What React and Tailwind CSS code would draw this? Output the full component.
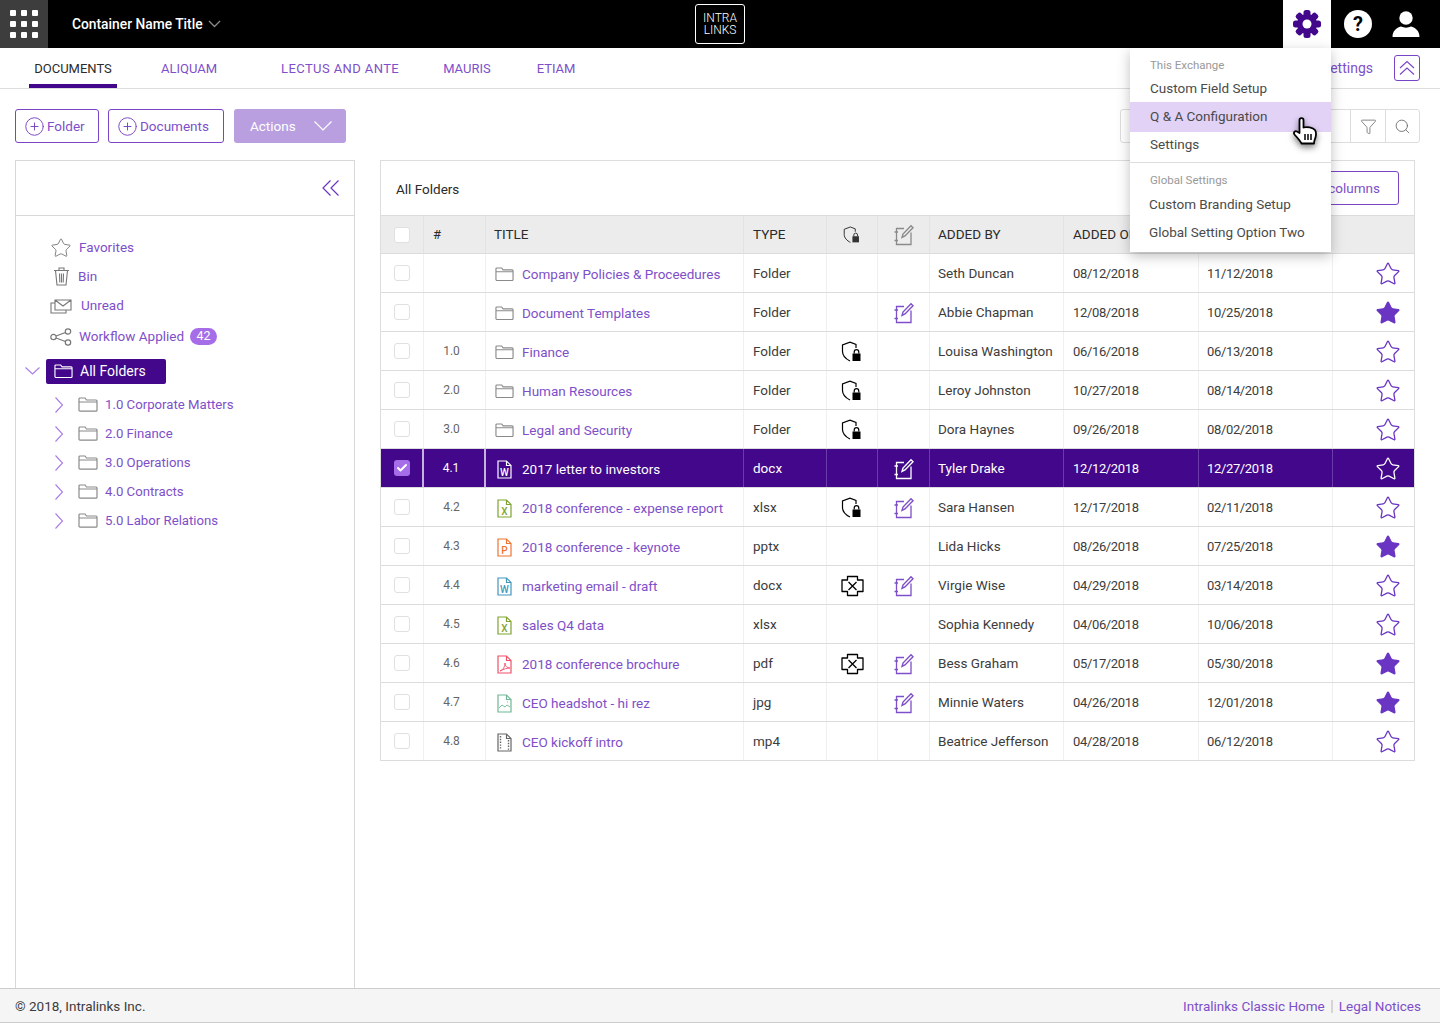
import { Check, CirclePlus, Filter, Search, Star } from 'lucide-react';

const ROWS = [
  { num: '', icon: 'folder', title: 'Company Policies & Proceedures', type: 'Folder', lock: '', edit: false, by: 'Seth Duncan', on: '08/12/2018', mod: '11/12/2018', fav: false },
  { num: '', icon: 'folder', title: 'Document Templates', type: 'Folder', lock: '', edit: true, by: 'Abbie Chapman', on: '12/08/2018', mod: '10/25/2018', fav: true },
  { num: '1.0', icon: 'folder', title: 'Finance', type: 'Folder', lock: 'lock', edit: false, by: 'Louisa Washington', on: '06/16/2018', mod: '06/13/2018', fav: false },
  { num: '2.0', icon: 'folder', title: 'Human Resources', type: 'Folder', lock: 'lock', edit: false, by: 'Leroy Johnston', on: '10/27/2018', mod: '08/14/2018', fav: false },
  { num: '3.0', icon: 'folder', title: 'Legal and Security', type: 'Folder', lock: 'lock', edit: false, by: 'Dora Haynes', on: '09/26/2018', mod: '08/02/2018', fav: false },
  { num: '4.1', icon: 'w', title: '2017 letter to investors', type: 'docx', lock: '', edit: true, by: 'Tyler Drake', on: '12/12/2018', mod: '12/27/2018', fav: false, selected: true },
  { num: '4.2', icon: 'x', title: '2018 conference - expense report', type: 'xlsx', lock: 'lock', edit: true, by: 'Sara Hansen', on: '12/17/2018', mod: '02/11/2018', fav: false },
  { num: '4.3', icon: 'p', title: '2018 conference - keynote', type: 'pptx', lock: '', edit: false, by: 'Lida Hicks', on: '08/26/2018', mod: '07/25/2018', fav: true },
  { num: '4.4', icon: 'w', title: 'marketing email - draft', type: 'docx', lock: 'x', edit: true, by: 'Virgie Wise', on: '04/29/2018', mod: '03/14/2018', fav: false },
  { num: '4.5', icon: 'x', title: 'sales Q4 data', type: 'xlsx', lock: '', edit: false, by: 'Sophia Kennedy', on: '04/06/2018', mod: '10/06/2018', fav: false },
  { num: '4.6', icon: 'pdf', title: '2018 conference brochure', type: 'pdf', lock: 'x', edit: true, by: 'Bess Graham', on: '05/17/2018', mod: '05/30/2018', fav: true },
  { num: '4.7', icon: 'img', title: 'CEO headshot - hi rez', type: 'jpg', lock: '', edit: true, by: 'Minnie Waters', on: '04/26/2018', mod: '12/01/2018', fav: true },
  { num: '4.8', icon: 'vid', title: 'CEO kickoff intro', type: 'mp4', lock: '', edit: false, by: 'Beatrice Jefferson', on: '04/28/2018', mod: '06/12/2018', fav: false },
];

const TREE = ['1.0 Corporate Matters', '2.0 Finance', '3.0 Operations', '4.0 Contracts', '5.0 Labor Relations'];

const FILE_COLORS = { w: '#3f97bd', x: '#7fa32f', p: '#ee7432', pdf: '#f0506a', img: '#6fb895', vid: '#666666' };

function FolderIcon({ className = 'text-[#8a8a8a]', size = 20 }) {
  return (
    <svg width={size} height={size * 0.75} viewBox="0 0 20 15" fill="none" stroke="currentColor" strokeWidth="1.2" className={className}>
      <path d="M1 13.2V2a1 1 0 0 1 1-1h5l1.5 2H18a1 1 0 0 1 1 1v9.2a1 1 0 0 1-1 1H2a1 1 0 0 1-1-1zM1 5h18" />
    </svg>
  );
}

function FileIcon({ kind, light }) {
  const color = light ? '#ffffff' : FILE_COLORS[kind];
  const letter = { w: 'W', x: 'X', p: 'P' }[kind];
  return (
    <svg width="15" height="19" viewBox="0 0 15 19" fill="none" stroke={color} strokeWidth="1.2">
      <path d="M1 1h8.5L14 5.5V18H1zM9.5 1v4.5H14" />
      {letter && <text x="7.5" y="15.5" textAnchor="middle" fontSize="10" fontWeight="500" fontFamily="Roboto, sans-serif" fill={color} stroke="none">{letter}</text>}
      {kind === 'pdf' && <path d="M3 16c3-1 5-4 5-8 0 3 2 5 5 5-3 0-6 1-10 3z" strokeWidth="0.9" />}
      {kind === 'img' && <path d="M2 14l3-3 3 2 2-2 3 2M10 8h1" strokeWidth="0.9" />}
      {kind === 'vid' && <path d="M3.5 3v14M11.5 7v10" strokeWidth="1.4" strokeDasharray="1.4 1.4" />}
    </svg>
  );
}

function ShieldLock({ size = 22, muted }) {
  const c = muted ? '#333333' : '#000000';
  return (
    <svg width={size} height={size} viewBox="0 0 22 22" fill="none">
      <path d="M15 7V3.5L9 1.2 1.5 4v6.5c0 4 3.5 7.5 7.5 9.5" stroke={c} strokeWidth="1.2" />
      <rect x="11.5" y="12.5" width="8" height="7.5" fill={c} />
      <path d="M13.2 12.5V11a2.3 2.3 0 0 1 4.6 0v1.5" stroke={c} strokeWidth="1.2" />
    </svg>
  );
}

function CrossBadge() {
  return (
    <svg width="23" height="22" viewBox="0 0 23 22" fill="none" stroke="#000000" strokeWidth="1.3">
      <path d="M6.5 1.5h10V5H22v11.500h-5.500v4h-10v-4H1V5h5.500z" strokeLinejoin="round" />
      <path d="M7.5 7l8 8M15.5 7l-8 8" />
    </svg>
  );
}

function NoteEdit({ color = '#7e4fc9' }) {
  return (
    <svg width="22" height="22" viewBox="0 0 22 22" fill="none" stroke={color} strokeWidth="1.3">
      <path d="M11 4.5H3.5v16H18V8.500" />
      <path d="M1.5 8H5M1.5 16.500H5" />
      <path d="M9 13.500l1-3.500 8-8.300 2 2-8 8.300z" strokeWidth="1.4" />
    </svg>
  );
}

function Gear() {
  return (
    <svg width="30" height="30" viewBox="0 0 30 30" fill="#42078a">
      {[0, 45, 90, 135].map(a => (
        <rect key={a} x="11.5" y="1" width="7" height="28" rx="2.5" transform={`rotate(${a} 15 15)`} />
      ))}
      <circle cx="15" cy="15" r="10" />
      <circle cx="15" cy="15" r="4.5" fill="#ffffff" />
    </svg>
  );
}

function MiniCheckbox({ checked }) {
  if (checked) {
    return (
      <span className="flex h-4 w-4 items-center justify-center rounded-[3px] bg-[#a56ee8]">
        <Check size={12} strokeWidth={4} className="text-white" />
      </span>
    );
  }
  return <span className="block h-4 w-4 rounded-[3px] border border-[#e0e0e0] bg-white" />;
}

function HandCursor() {
  return (
    <svg width="26" height="30" viewBox="0 0 26 30" className="drop-shadow-[0_3px_3px_rgba(0,0,0,0.5)]">
      <path d="M7.5 3c0-2.600 4-2.600 4 0v7.500c3.500-1 9.500 0 11.500 2.500 1 1.500 1 5.500.5 7.500-.5 2-1.500 3-1.500 6H9.500c-1-2.500-4-5.500-7-9-1.500-2 .5-4 2.500-3l2.500 1.500z" fill="#ffffff" stroke="#000000" strokeWidth="1.8" strokeLinejoin="round" />
      <path d="M13 17v6M16 17v6M19 17v6" stroke="#000000" strokeWidth="1.5" />
    </svg>
  );
}

function Cell({ width, className = '', children, selected }) {
  return (
    <div className={`flex h-full shrink-0 items-center border-r ${selected ? 'border-[#6a3aa6]' : 'border-[#f0f0f0]'} ${className}`} style={{ width }}>
      {children}
    </div>
  );
}

function TableRow({ row }) {
  const s = row.selected;
  return (
    <div className={`flex h-[39px] items-center border-b border-[#dcdcdc] ${s ? 'bg-[#42078a] text-white' : 'bg-white text-[#3c3c3c]'}`}>
      <Cell width={43} selected={s} className={`justify-center ${s ? 'border-r-2 border-r-[#c5b3dc]' : ''}`}><MiniCheckbox checked={s} /></Cell>
      <Cell width={62} selected={s} className={`justify-center pr-[6px] text-[12px] ${s ? 'border-r-2 border-r-[#c5b3dc] text-white' : 'text-[#666666]'}`}>{row.num}</Cell>
      <Cell width={258} selected={s} className="gap-[8px] pl-[8px] pt-[2px]">
        <span className="flex w-[20px] justify-center">
          {row.icon === 'folder' ? <FolderIcon size={19} /> : <FileIcon kind={row.icon} light={s} />}
        </span>
        <span className={`text-[13.5px] ${s ? 'text-white' : 'text-[#7e4fc9]'}`}>{row.title}</span>
      </Cell>
      <Cell width={83} selected={s} className="pl-[9px] text-[13.5px]">{row.type}</Cell>
      <Cell width={51} selected={s} className="justify-center pt-[2px]">
        {row.lock === 'lock' && <ShieldLock />}
        {row.lock === 'x' && <CrossBadge />}
      </Cell>
      <Cell width={52} selected={s} className="justify-center pt-[2px]">
        {row.edit && <NoteEdit color={s ? '#ffffff' : '#7e4fc9'} />}
      </Cell>
      <Cell width={134} selected={s} className="pl-[8px] text-[13.5px]">{row.by}</Cell>
      <Cell width={135} selected={s} className="pl-[9px] pt-[1px] text-[13px] tracking-[-0.35px]">{row.on}</Cell>
      <Cell width={134} selected={s} className="pl-[8px] pt-[1px] text-[13px] tracking-[-0.35px]">{row.mod}</Cell>
      <div className="flex flex-1 justify-center pl-[28px] pt-[1px]">
        <Star size={26} strokeWidth={1.2} className={s ? 'text-white' : 'text-[#6a35c2]'} fill={row.fav ? '#6a35c2' : 'none'} />
      </div>
    </div>
  );
}

function NavItem({ icon, label, textClass = 'ml-[7px]', className = 'h-[29px]', children }) {
  return (
    <div className={`flex items-center pl-[34px] text-[13.5px] text-[#7e4fc9] ${className}`}>
      <span className="flex w-[22px] justify-center text-[#777777]">{icon}</span>
      <span className={textClass}>{label}</span>
      {children}
    </div>
  );
}

function OutlineButton({ label, className = '' }) {
  return (
    <button className={`flex h-[34px] items-center gap-[2px] rounded-[3px] border border-[#7a45c4] bg-white pl-[8px] text-[13.5px] text-[#7e4fc9] ${className}`}>
      <CirclePlus size={21} strokeWidth={1.1} className="text-[#7a45c4]" />
      {label}
    </button>
  );
}

function MenuItem({ label, className = 'h-[28px] pl-[20px]' }) {
  return <div className={`flex items-center text-[13.5px] text-[#4a4a4a] ${className}`}>{label}</div>;
}

export default function App() {
  return (
    <div className="relative flex h-[1024px] w-[1440px] flex-col overflow-hidden bg-white pb-px font-['Roboto',sans-serif]">
      {/* top bar */}
      <div className="flex h-12 shrink-0 items-center bg-black text-white">
        <div className="grid h-12 w-12 grid-cols-3 content-center justify-items-center gap-[5px] bg-[#3d3d3d] px-[10px]">
          {Array.from({ length: 9 }).map((_, i) => <span key={i} className="h-[6px] w-[6px] rounded-[1px] bg-white" />)}
        </div>
        <div className="ml-6 flex w-[623px] items-center gap-[5px] text-[13.8px] font-medium">
          Container Name Title
          <svg width="13" height="8" viewBox="0 0 13 8" fill="none" stroke="#8a8a8a" strokeWidth="1.3"><path d="M1 1l5.500 5.500L12 1" /></svg>
        </div>
        <div className="flex h-10 w-[50px] flex-col items-center justify-center rounded-[3px] border border-white text-[12px] font-light leading-[12px]">
          <span>INTRA</span><span>LINKS</span>
        </div>
        <div className="ml-auto flex h-12 items-center pr-[13px]">
          <div className="flex h-12 w-12 items-center justify-center bg-white"><Gear /></div>
          <div className="flex w-[54px] justify-center">
            <span className="flex h-[28px] w-[28px] items-center justify-center rounded-full bg-white text-[20px] font-bold leading-none text-black">?</span>
          </div>
          <div className="flex w-[42px] justify-center">
            <svg width="28" height="28" viewBox="0 0 28 28" fill="#ffffff">
              <circle cx="14" cy="8" r="6.7" />
              <path d="M0.5 27c0-6 4-9.500 8.500-10.500 3 1.500 7 1.500 10 0 4.500 1 8.500 4.500 8.500 10.500z" />
            </svg>
          </div>
        </div>
      </div>

      {/* tabs */}
      <div className="flex h-[41px] shrink-0 items-stretch border-b border-[#dddddd] pl-[29px] text-[13px]">
        <div className="flex w-[88px] items-center justify-center border-b-4 border-[#42078a] pt-[6px] text-[#2b2b2b]">DOCUMENTS</div>
        <div className="ml-[44px] flex items-center pt-[2px] text-[#7e4fc9]">ALIQUAM</div>
        <div className="ml-[64px] flex items-center pt-[2px] tracking-[0.4px] text-[#7e4fc9]">LECTUS AND ANTE</div>
        <div className="ml-[44px] flex items-center pt-[2px] text-[#7e4fc9]">MAURIS</div>
        <div className="ml-[46px] flex items-center pt-[2px] text-[#7e4fc9]">ETIAM</div>
        <div className="ml-auto flex items-center pr-[20px] text-[14px] text-[#7e4fc9]">
          <span>Settings</span>
          <span className="ml-[21px] flex h-[26px] w-[26px] items-center justify-center rounded-[3px] border border-[#7a45c4]">
            <svg width="16" height="16" viewBox="0 0 16 16" fill="none" stroke="#7a45c4" strokeWidth="1.1"><path d="M1 8l7-6.500L15 8M1 14.500L8 8l7 6.500" /></svg>
          </span>
        </div>
      </div>

      {/* toolbar */}
      <div className="flex h-[71px] shrink-0 items-center pl-[15px] pr-[20px] pt-[3px]">
        <OutlineButton label="Folder" className="w-[84px]" />
        <OutlineButton label="Documents" className="ml-[9px] w-[116px]" />
        <button className="ml-[10px] flex h-[34px] w-[112px] items-center justify-between rounded-[3px] bg-[#b99fdf] pl-4 pr-[14px] text-[13.5px] text-white">
          Actions
          <svg width="18" height="10" viewBox="0 0 18 10" fill="none" stroke="#ffffff" strokeWidth="1.2"><path d="M0.5 0.500L9 9l8.500-8.500" /></svg>
        </button>
        <div className="ml-auto flex h-[34px] w-[300px] items-stretch rounded-[3px] border border-[#dddddd]">
          <div className="flex-1" />
          <div className="flex w-[35px] items-center justify-center border-l border-[#dddddd]"><Filter size={17} strokeWidth={1.1} className="text-[#666666]" /></div>
          <div className="flex w-[34px] items-center justify-center border-l border-[#dddddd]"><Search size={17} strokeWidth={1.2} className="text-[#666666]" /></div>
        </div>
      </div>

      {/* content */}
      <div className="flex min-h-0 flex-1 pl-[15px] pr-[25px]">
        <aside className="flex w-[340px] shrink-0 flex-col border-x border-t border-[#d8d8d8]">
          <div className="flex h-[55px] shrink-0 items-center justify-end border-b border-[#d8d8d8] pr-[15px]">
            <svg width="17" height="16" viewBox="0 0 17 16" fill="none" stroke="#6a35c2" strokeWidth="1.2"><path d="M8.5 0.500L1 8l7.500 7.500M16.500 0.500L9 8l7.500 7.500" /></svg>
          </div>
          <div className="pt-[17px]">
            <NavItem icon={<Star size={22} strokeWidth={1} />} label="Favorites" />
            <NavItem
              icon={
                <svg width="17" height="19" viewBox="0 0 17 19" fill="none" stroke="currentColor" strokeWidth="1.1">
                  <path d="M1 3.500h15M6 3.500V1h5v2.500M2.500 3.500L4 18h9l1.500-14.500M6.500 6.500l.3 9M8.500 6.500v9M10.500 6.500l-.3 9" />
                </svg>
              }
              label="Bin"
              textClass="ml-[6px]"
            />
            <NavItem
              icon={
                <svg width="22" height="16" viewBox="0 0 22 16" fill="none" stroke="currentColor" strokeWidth="1.1">
                  <path d="M5 2h16v10H5zM5 2l8 6 8-6M5 5H1v10h15v-3" />
                </svg>
              }
              label="Unread"
              textClass="ml-[9px]"
            />
            <NavItem
              className="mt-[2px] h-[29px]"
              icon={
                <svg width="22" height="18" viewBox="0 0 22 18" fill="none" stroke="currentColor" strokeWidth="1.2">
                  <circle cx="3.5" cy="9" r="2.7" /><circle cx="18" cy="3.5" r="2.7" /><circle cx="18" cy="14.5" r="2.7" />
                  <path d="M6 8l9.500-3.500M6 10l9.500 3.500" />
                </svg>
              }
              label="Workflow Applied"
            >
              <span className="ml-[6px] flex h-[17px] w-[27px] items-center justify-center rounded-full bg-[#a56ee8] text-[12.5px] text-white">42</span>
            </NavItem>
            <div className="mt-[7px] flex h-[26px] items-center pl-[9px]">
              <svg width="15" height="8" viewBox="0 0 15 8" fill="none" stroke="#a77be8" strokeWidth="1.1"><path d="M0.5 0.500l7 6.500 7-6.500" /></svg>
              <div className="ml-[6px] flex h-[25px] w-[120px] items-center gap-[7px] rounded-[2px] bg-[#42078a] pl-2 text-[14px] text-white">
                <FolderIcon className="text-white" size={19} />
                All Folders
              </div>
            </div>
            <div className="mt-[6px]">
              {TREE.map(t => (
                <div key={t} className="flex h-[29px] items-center pl-[39px] text-[13.2px] text-[#7e4fc9]">
                  <svg width="8" height="16" viewBox="0 0 8 16" fill="none" stroke="#a77be8" strokeWidth="1.1"><path d="M0.5 0.500L7.500 8l-7 7.500" /></svg>
                  <span className="ml-[15px]"><FolderIcon size={20} /></span>
                  <span className="ml-[7px]">{t}</span>
                </div>
              ))}
            </div>
          </div>
        </aside>

        <section className="ml-[25px] min-w-0 flex-1">
          <div className="border-x border-t border-[#dddddd]">
            <div className="flex h-[54px] items-center justify-between pl-[15px] pr-[15px] text-[13.5px] text-[#2b2b2b]">
              <span className="pt-[2px]">All Folders</span>
              <button className="flex h-[34px] w-[130px] items-center justify-end rounded-[3px] border border-[#7a45c4] pr-[18px] text-[13.5px] text-[#7e4fc9]">Edit columns</button>
            </div>
            <div className="flex h-[39px] items-center border-y border-[#dcdcdc] bg-[#ececec] text-[13.5px] text-[#2b2b2b]">
              <div className="flex h-full w-[43px] items-center justify-center border-r border-[#e3e3e3]"><MiniCheckbox /></div>
              <div className="flex h-full w-[62px] items-center border-r border-[#e3e3e3] pl-[9px] text-[13px]">#</div>
              <div className="flex h-full w-[258px] items-center border-r border-[#e3e3e3] pl-[8px]">TITLE</div>
              <div className="flex h-full w-[83px] items-center border-r border-[#e3e3e3] pl-[9px]">TYPE</div>
              <div className="flex h-full w-[51px] items-center justify-center border-r border-[#e3e3e3]"><ShieldLock size={18} muted /></div>
              <div className="flex h-full w-[52px] items-center justify-center border-r border-[#e3e3e3]"><NoteEdit color="#8a8a8a" /></div>
              <div className="flex h-full w-[134px] items-center border-r border-[#e3e3e3] pl-[8px]">ADDED BY</div>
              <div className="flex h-full w-[135px] items-center pl-[9px]">ADDED ON</div>
            </div>
            {ROWS.map(r => <TableRow key={r.title} row={r} />)}
          </div>
        </section>
      </div>

      {/* footer */}
      <div className="flex h-[35px] shrink-0 items-center justify-between border-y border-[#cccccc] bg-[#f5f5f5] pl-[15px] pr-[19px] pt-[1px] text-[13.5px]">
        <span className="text-[#3c3c3c]">© 2018, Intralinks Inc.</span>
        <span className="flex items-center text-[#7e4fc9]">
          Intralinks Classic Home
          <span className="mx-[6px] h-[13px] w-[2px] bg-[#d5d5d5]" />
          Legal Notices
        </span>
      </div>

      {/* settings dropdown */}
      <div className="absolute left-[1130px] top-[48px] h-[204px] w-[201px] bg-white shadow-[0_4px_12px_rgba(0,0,0,0.25)]">
        <div className="pl-[20px] pt-[10px] text-[11.5px] leading-[14px] text-[#999999]">This Exchange</div>
        <div className="mt-[2px]">
          <MenuItem label="Custom Field Setup" />
          <MenuItem label="Q & A Configuration" className="h-[30px] bg-[#e2d2f6] pb-[2px] pl-[20px]" />
          <MenuItem label="Settings" className="h-[24px] pl-[20px]" />
        </div>
        <div className="mt-[6px] border-t border-[#dddddd] pl-[20px] pt-[10px] text-[11.5px] leading-[14px] text-[#999999]">Global Settings</div>
        <div className="mt-[3px]">
          <MenuItem label="Custom Branding Setup" className="h-[28px] pl-[19px]" />
          <MenuItem label="Global Setting Option Two" className="h-[28px] pl-[19px]" />
        </div>
      </div>
      <div className="absolute left-[1292px] top-[117px]"><HandCursor /></div>
    </div>
  );
}
